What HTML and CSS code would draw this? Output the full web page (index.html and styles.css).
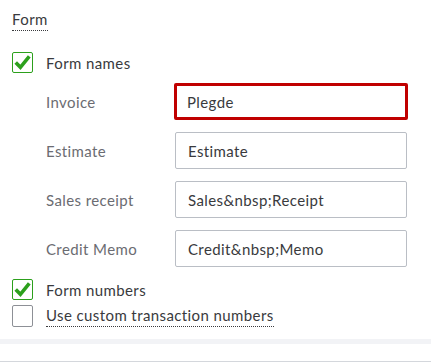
FILE: index.html
```html
<!DOCTYPE html>
<html lang="en">
<head>
  <meta charset="UTF-8" />
  <title>Form settings</title>
  <link rel="stylesheet" href="styles.css">
</head>
<body>
  <div class="panel">
    <div class="section-title"><span class="dotted">Form</span></div>

    <div class="check-row names-row">
      <span class="box checked">
        <svg viewBox="0 0 21 21" width="21" height="21"><path d="M3 10.5 L8.2 15.8 L18 3.8" fill="none" stroke="#2ca01c" stroke-width="4" stroke-linejoin="miter"/></svg>
      </span>
      <span class="check-label">Form names</span>
    </div>

    <div class="field-list">
      <div class="field">
        <span class="field-label">Invoice</span>
        <div class="input error">Plegde</div>
      </div>
      <div class="field">
        <span class="field-label">Estimate</span>
        <div class="input">Estimate</div>
      </div>
      <div class="field">
        <span class="field-label">Sales receipt</span>
        <div class="input">Sales&amp;nbsp;Receipt</div>
      </div>
      <div class="field">
        <span class="field-label">Credit Memo</span>
        <div class="input">Credit&amp;nbsp;Memo</div>
      </div>
    </div>

    <div class="check-row numbers-row">
      <span class="box checked">
        <svg viewBox="0 0 21 21" width="21" height="21"><path d="M3 10.5 L8.2 15.8 L18 3.8" fill="none" stroke="#2ca01c" stroke-width="4" stroke-linejoin="miter"/></svg>
      </span>
      <span class="check-label">Form numbers</span>
    </div>
    <div class="check-row custom-row">
      <span class="box"></span>
      <span class="check-label dotted">Use custom transaction numbers</span>
    </div>
  </div>

  <div class="band"></div>
  <div class="ruler">
    <span></span><span></span><span></span><span></span><span></span><span></span><span></span>
  </div>
</body>
</html>
```

FILE: styles.css
```css
body {
  margin: 0;
  font-family: Lato, 'Noto Sans', sans-serif;
  font-size: 15px;
  color: #393a3d;
  background: #fff;
  width: 431px;
  height: 362px;
  overflow: hidden;
}

.panel {
  padding: 9px 0 0 12px;
}

.dotted {
  border-bottom: 1px dotted #393a3d;
  padding-bottom: 2px;
}

.section-title {
  line-height: 20px;
  height: 20px;
  letter-spacing: 0.4px;
}

.check-row {
  display: flex;
  align-items: center;
  gap: 13px;
}

.names-row {
  margin-top: 23px;
}

.box {
  width: 19px;
  height: 19px;
  border: 1px solid #8d9096;
  border-radius: 2px;
  flex: none;
  display: flex;
  align-items: center;
  justify-content: center;
}

.box.checked {
  border-color: #2ca01c;
}

.box svg {
  width: 19px;
  height: 19px;
}

.check-label {
  line-height: 18px;
  letter-spacing: 0.4px;
}

.field-list {
  display: flex;
  flex-direction: column;
  gap: 12px;
  margin-top: 10px;
  padding-left: 34px;
}

.field {
  display: flex;
  align-items: center;
}

.field-label {
  width: 129px;
  line-height: 18px;
  color: #6b6c72;
  letter-spacing: 0.4px;
}

.input {
  box-sizing: border-box;
  width: 232px;
  height: 37px;
  border: 1px solid #babec5;
  border-radius: 2px;
  padding: 0 12px;
  display: flex;
  align-items: center;
  letter-spacing: 0.4px;
}

.input.error {
  width: 234px;
  margin-left: -1px;
  border: 3px solid #c00000;
  padding-left: 10px;
}

.numbers-row {
  margin-top: 12px;
}

.custom-row {
  margin-top: 5px;
}

.custom-row .box {
  height: 20px;
}

.band {
  height: 5px;
  margin-top: 12px;
  background: #f2f3f6;
}

.ruler {
  margin-top: 6px;
  height: 11px;
  border-bottom: 1px solid #d4d7dc;
  display: flex;
  padding-left: 57px;
  gap: 63px;
}

.ruler span {
  width: 1px;
  background: #d4d7dc;
}
```
